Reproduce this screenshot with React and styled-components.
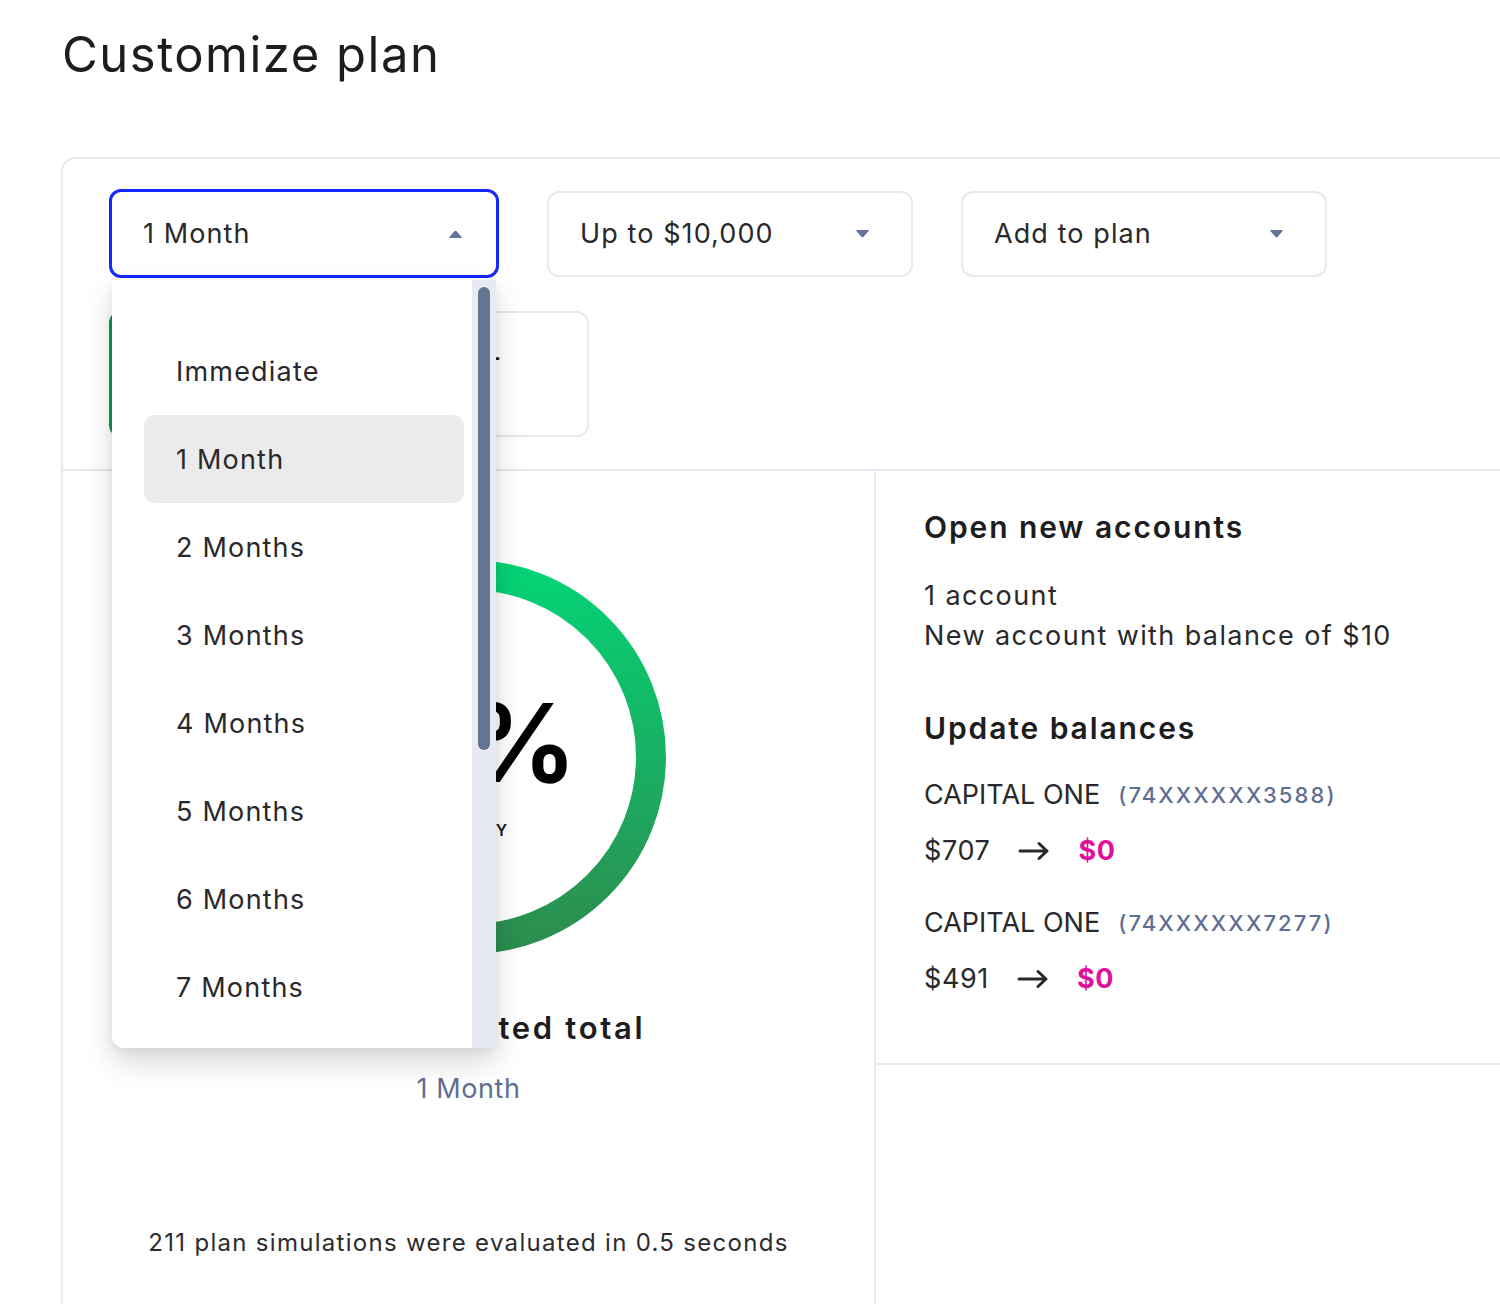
import React from 'react';
import styled, { createGlobalStyle } from 'styled-components';

const GlobalStyle = createGlobalStyle`
  html, body { margin: 0; padding: 0; background: #ffffff; }
  body {
    font-family: Inter, "Open Sans", "Liberation Sans", sans-serif;
    color: #262628;
    overflow: hidden;
  }
  * { box-sizing: border-box; }
`;

const Page = styled.div`
  width: 1500px;
  height: 1304px;
  overflow: hidden;
  padding-left: 61px;
`;

const Title = styled.h1`
  margin: 0;
  padding: 25px 0 0 1px;
  font-size: 49px;
  line-height: 60px;
  font-weight: 400;
  color: #1d1d1f;
  letter-spacing: 1.5px;
`;

const Card = styled.div`
  margin-top: 72px;
  width: 1480px;
  border: 2px solid #e6e9f2;
  border-right: none;
  border-bottom: none;
  border-radius: 14px 0 0 0;
`;

const Controls = styled.div`
  padding: 30px 0 32px 46px;
  border-bottom: 2px solid #e6e9f2;
`;

const SelectRow = styled.div`
  display: flex;
  align-items: center;
  gap: 48px;
`;

const SelectBox = styled.div`
  position: relative;
  display: flex;
  align-items: center;
  justify-content: space-between;
  width: ${p => (p.$focused ? '390px' : '366px')};
  height: ${p => (p.$focused ? '89px' : '86px')};
  border: ${p => (p.$focused ? '3px solid #1428ff' : '2px solid #e6e9f2')};
  border-radius: 12px;
  padding: ${p => (p.$focused ? '0 33px 0 31px' : '0 41px 0 31px')};
  font-size: 27px;
  letter-spacing: 1.1px;
  color: #29292b;
  background: #fff;
`;

const Caret = styled.svg`
  width: 15px;
  height: 8px;
  flex: none;
  color: #64739a;
`;

const OptionRow = styled.div`
  display: flex;
  margin-top: 33px;
`;

const OptionCard = styled.div`
  display: flex;
  align-items: flex-start;
  justify-content: flex-end;
  width: 480px;
  height: 126px;
  border: 2px solid #e6e9f2;
  border-left: 4px solid #0a9a50;
  border-radius: 12px;
  padding: 28px 86px 0 28px;
  font-size: 27px;
  font-weight: 600;
  color: #1d1d1f;
`;

const Body = styled.div`
  display: grid;
  grid-template-columns: 813px 1fr;
`;

const LeftPanel = styled.div`
  display: flex;
  flex-direction: column;
  align-items: center;
  border-right: 2px solid #e6e9f2;
  height: 900px;
  padding-top: 89px;
`;

const Gauge = styled.div`
  display: grid;
  width: 394px;
  height: 394px;
  & > * { grid-area: 1 / 1; }
`;

const GaugeText = styled.div`
  display: flex;
  flex-direction: column;
  align-items: center;
  justify-content: center;
  padding-top: 14px;
`;

const Percent = styled.div`
  margin-right: 10px;
  font-size: 108px;
  line-height: 110px;
  font-weight: 700;
  color: #000;
  letter-spacing: -3px;
`;

const GaugeLabel = styled.div`
  margin-top: 22px;
  font-size: 16px;
  line-height: 20px;
  font-weight: 600;
  letter-spacing: 1.5px;
  color: #1d1d1f;
`;

const TotalTitle = styled.div`
  margin-top: 54px;
  font-size: 31px;
  line-height: 40px;
  font-weight: 600;
  letter-spacing: 2.7px;
  color: #1d1d1f;
`;

const TotalSub = styled.div`
  margin-top: 21px;
  font-size: 27px;
  line-height: 40px;
  letter-spacing: 0.6px;
  color: #5f6e93;
`;

const Footnote = styled.div`
  margin-top: 117px;
  font-size: 24px;
  line-height: 34px;
  color: #2c2c2e;
  letter-spacing: 1.3px;
`;

const RightPanel = styled.div`
  display: flex;
  flex-direction: column;
`;

const Summary = styled.div`
  padding: 36px 0 64px 48px;
  border-bottom: 2px solid #e6e9f2;
`;

const SectionTitle = styled.h3`
  margin: ${p => (p.$first ? '0' : '52px')} 0 0;
  font-size: 30px;
  line-height: 40px;
  font-weight: 600;
  letter-spacing: 1.9px;
  color: #1d1d1f;
`;

const Line = styled.div`
  margin-top: ${p => p.$mt || 0}px;
  display: flex;
  align-items: center;
  font-size: 27px;
  line-height: 40px;
  letter-spacing: ${p => p.$ls || '1.4px'};
  color: #29292b;
`;

const AccountNo = styled.span`
  margin-left: 18px;
  font-size: 22px;
  font-weight: 500;
  letter-spacing: 2.1px;
  color: #5f6e93;
`;

const Arrow = styled.svg`
  width: 32px;
  height: 20px;
  margin: 0 28px 0 28px;
  color: #29292b;
`;

const NewAmount = styled.span`
  font-weight: 700;
  letter-spacing: 0.6px;
  color: #e0109b;
`;

const Menu = styled.div`
  position: absolute;
  top: calc(100% + 5px);
  left: 0;
  width: 384px;
  height: 768px;
  display: flex;
  background: #fff;
  border-radius: 0 0 0 12px;
  box-shadow: 0 14px 30px rgba(0, 0, 0, 0.16), 0 3px 8px rgba(0, 0, 0, 0.06);
  overflow: hidden;
  z-index: 10;
  letter-spacing: 1.2px;
`;

const MenuList = styled.div`
  flex: 1;
  padding: 47px 8px 0 32px;
  overflow: hidden;
`;

const MenuItem = styled.div`
  display: flex;
  align-items: center;
  height: 88px;
  padding-left: 32px;
  border-radius: 10px;
  font-size: 27px;
  color: #29292b;
  background: ${p => (p.$active ? '#ebebeb' : 'transparent')};
`;

const ScrollTrack = styled.div`
  width: 24px;
  padding: 7px 6px;
  background: #e7eaf3;
`;

const ScrollThumb = styled.div`
  height: 463px;
  border-radius: 6px;
  background: #66758f;
`;

const CaretIcon = ({ up }) => (
  <Caret viewBox="0 0 15 8">
    <path
      d={up ? 'M1.2 7.2 L6.4 1.2 Q7.5 0.1 8.6 1.2 L13.8 7.2 Q14.2 8 13.2 8 L1.8 8 Q0.8 8 1.2 7.2 Z' : 'M1.2 0.8 L6.4 6.8 Q7.5 7.9 8.6 6.8 L13.8 0.8 Q14.2 0 13.2 0 L1.8 0 Q0.8 0 1.2 0.8 Z'}
      fill="currentColor"
    />
  </Caret>
);

const ArrowIcon = () => (
  <Arrow viewBox="0 0 32 20">
    <path d="M2 10 H29 M21 2.5 L29 10 L21 17.5" fill="none" stroke="currentColor" strokeWidth="3" strokeLinecap="round" strokeLinejoin="round" />
  </Arrow>
);

const months = ['Immediate', '1 Month', '2 Months', '3 Months', '4 Months', '5 Months', '6 Months', '7 Months'];

const accounts = [
  { bank: 'CAPITAL ONE', no: '(74XXXXXX3588)', from: '$707', to: '$0' },
  { bank: 'CAPITAL ONE', no: '(74XXXXXX7277)', from: '$491', to: '$0' },
];

export default function App() {
  return (
    <>
      <GlobalStyle />
      <Page>
        <Title>Customize plan</Title>
        <Card>
          <Controls>
            <SelectRow>
              <SelectBox $focused>
                <span>1 Month</span>
                <CaretIcon up />
                <Menu>
                  <MenuList>
                    {months.map(m => (
                      <MenuItem key={m} $active={m === '1 Month'}>{m}</MenuItem>
                    ))}
                  </MenuList>
                  <ScrollTrack>
                    <ScrollThumb />
                  </ScrollTrack>
                </Menu>
              </SelectBox>
              <SelectBox>
                <span>Up to $10,000</span>
                <CaretIcon />
              </SelectBox>
              <SelectBox>
                <span>Add to plan</span>
                <CaretIcon />
              </SelectBox>
            </SelectRow>
            <OptionRow>
              <OptionCard>
                <span>-</span>
              </OptionCard>
            </OptionRow>
          </Controls>
          <Body>
            <LeftPanel>
              <Gauge>
                <svg viewBox="0 0 394 394" width="394" height="394">
                  <defs>
                    <linearGradient id="ring" x1="0" y1="0" x2="0" y2="1">
                      <stop offset="0" stopColor="#05d275" />
                      <stop offset="1" stopColor="#2c8e4f" />
                    </linearGradient>
                  </defs>
                  <circle cx="197" cy="197" r="182" fill="none" stroke="url(#ring)" strokeWidth="30" />
                </svg>
                <GaugeText>
                  <Percent>10%</Percent>
                  <GaugeLabel>NET APY</GaugeLabel>
                </GaugeText>
              </Gauge>
              <TotalTitle>Your estimated total</TotalTitle>
              <TotalSub>1 Month</TotalSub>
              <Footnote>211 plan simulations were evaluated in 0.5 seconds</Footnote>
            </LeftPanel>
            <RightPanel>
              <Summary>
                <SectionTitle $first>Open new accounts</SectionTitle>
                <Line $mt={29}>1 account</Line>
                <Line>New account with balance of $10</Line>
                <SectionTitle>Update balances</SectionTitle>
                {accounts.map((a, i) => (
                  <React.Fragment key={a.no}>
                    <Line $mt={i === 0 ? 27 : 32} $ls="0">
                      <span>{a.bank}</span>
                      <AccountNo>{a.no}</AccountNo>
                    </Line>
                    <Line $mt={16} $ls="0.6px">
                      <span>{a.from}</span>
                      <ArrowIcon />
                      <NewAmount>{a.to}</NewAmount>
                    </Line>
                  </React.Fragment>
                ))}
              </Summary>
            </RightPanel>
          </Body>
        </Card>
      </Page>
    </>
  );
}
